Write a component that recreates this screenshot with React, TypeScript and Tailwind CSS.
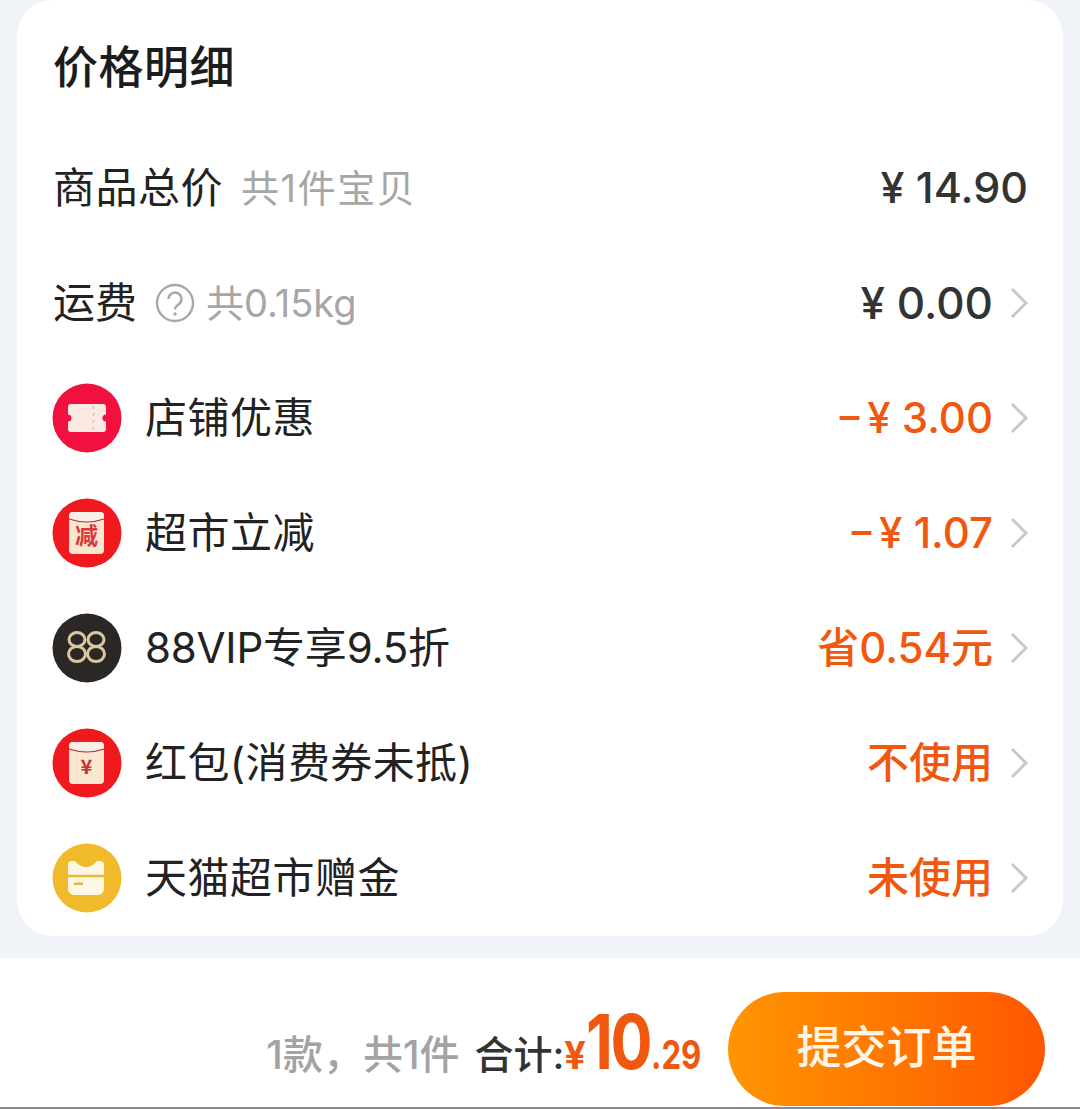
import React from "react";

const font = "font-['Inter','Noto_Sans_CJK_SC',sans-serif]";

const Chevron = () => (
  <svg width="20" height="32" viewBox="0 0 20 32" fill="none" className="ml-[16px] mr-[1px] shrink-0">
    <path d="M3 2 L17 16 L3 30" stroke="#c8c8c8" strokeWidth="3" />
  </svg>
);

const Disc = ({ color, children }: { color: string; children: React.ReactNode }) => (
  <svg width="70" height="70" viewBox="0 0 70 70" className="shrink-0">
    <circle cx="35" cy="35" r="34.5" fill={color} />
    {children}
  </svg>
);

const TicketIcon = () => (
  <Disc color="#f0113f">
    <path
      d="M16 24 a3 3 0 0 1 3-3 H51 a3 3 0 0 1 3 3 V31.5 a3.5 3.5 0 0 0 0 7 V46 a3 3 0 0 1-3 3 H19 a3 3 0 0 1-3-3 V38.5 a3.5 3.5 0 0 0 0-7 Z"
      fill="#fbeae4"
    />
    <path d="M41.5 23 V48" stroke="#f3c0ba" strokeWidth="2" strokeDasharray="3 4" />
  </Disc>
);

const EnvelopeIcon = ({ label, size, color }: { label: string; size: number; color: string }) => (
  <Disc color="#f01a1e">
    <rect x="17" y="14" width="35" height="42" rx="4" fill="#fbe7cf" />
    <path d="M17 18 a4 4 0 0 1 4-4 H48 a4 4 0 0 1 4 4 V21 Q35 27 17 21 Z" fill="#f8f0e8" />
    <path d="M17 21 Q35 27 52 21" stroke="#b52a30" strokeWidth="1.2" fill="none" />
    <text x="34.5" y="46" textAnchor="middle" fontSize={size} fontWeight="700" fill={color} fontFamily="'Noto Sans CJK SC',sans-serif">
      {label}
    </text>
  </Disc>
);

const VipIcon = () => (
  <Disc color="#2b2725">
    <g fill="none" stroke="#d9c7a0" strokeWidth="3">
      <ellipse cx="25" cy="26.5" rx="8" ry="7" />
      <ellipse cx="25" cy="41" rx="8.5" ry="7.5" />
      <ellipse cx="44" cy="26.5" rx="8" ry="7" />
      <ellipse cx="44" cy="41" rx="8.5" ry="7.5" />
    </g>
  </Disc>
);

const CardIcon = () => (
  <Disc color="#f1b92c">
    <path
      d="M16 22 a4 4 0 0 1 4-4 H23 Q28 24 34 24 Q40 24 45 18 H48 a4 4 0 0 1 4 4 V46 a6 6 0 0 1-6 6 H22 a6 6 0 0 1-6-6 Z"
      fill="#fdf7e6"
    />
    <path d="M16 33 H52" stroke="#f1b92c" strokeWidth="2.5" />
    <rect x="22" y="39.5" width="9" height="2.5" fill="#e2b64a" />
  </Disc>
);

const rows = [
  { icon: <TicketIcon />, label: "店铺优惠", value: "−\u200A¥ 3.00", track: "tracking-[0.5px]" },
  { icon: <EnvelopeIcon label="减" size={23} color="#d8393a" />, label: "超市立减", value: "−\u200A¥ 1.07", track: "tracking-[0.5px]" },
  { icon: <VipIcon />, label: "88VIP专享9.5折", value: "省0.54元", track: "tracking-[-0.2px]" },
  { icon: <EnvelopeIcon label="¥" size={20} color="#c8322f" />, label: "红包(消费券未抵)", value: "不使用", track: "tracking-[0.4px]" },
  { icon: <CardIcon />, label: "天猫超市赠金", value: "未使用", track: "tracking-[0.5px]" },
];

export default function App() {
  return (
    <div className={`${font} h-[1109px] w-[1080px] overflow-hidden bg-[#f0f4f8] flex flex-col`}>
      <div className="mx-[17px] h-[936px] shrink-0 rounded-[36px] bg-white pl-[36px] pr-[35px]">
        <div className="flex h-[130px] items-center pt-[4px] text-[45px] font-medium leading-none tracking-[0.5px] text-[#1c1c1c]">
          价格明细
        </div>
        <div className="flex h-[115px] items-center justify-between">
          <div className="flex items-center">
            <span className="text-[42px] leading-none tracking-[0.5px] text-[#222222]">商品总价</span>
            <span className="ml-[18px] text-[38px] leading-none tracking-[1.6px] text-[#a6a6a6]">共1件宝贝</span>
          </div>
          <span className="text-[43px] font-medium leading-none text-[#333333]">¥ 14.90</span>
        </div>
        <div className="flex h-[115px] items-center justify-between">
          <div className="flex items-center">
            <span className="text-[42px] leading-none text-[#222222]">运费</span>
            <svg width="40" height="40" viewBox="0 0 40 40" fill="none" className="ml-[18px]">
              <circle cx="20" cy="20" r="18" stroke="#a8a8a8" strokeWidth="2.4" />
              <path d="M13.5 16 a6.5 6.5 0 1 1 10 5.5 c-2.5 1.7-3.5 2.5-3.5 5" stroke="#a8a8a8" strokeWidth="2.4" />
              <circle cx="20" cy="31" r="1.7" fill="#a8a8a8" />
            </svg>
            <span className="ml-[11px] text-[38px] leading-none text-[#a6a6a6]">共0.15kg</span>
          </div>
          <div className="mr-[-2px] flex items-center">
            <span className="text-[44px] font-medium leading-none text-[#333333]">¥ 0.00</span>
            <Chevron />
          </div>
        </div>
        {rows.map((r) => (
          <div key={r.label} className="flex h-[115px] items-center justify-between">
            <div className="-ml-[1px] flex items-center">
              {r.icon}
              <span className={`ml-[23px] text-[42px] leading-none text-[#222222] ${r.track}`}>{r.label}</span>
            </div>
            <div className="mr-[-2px] flex items-center">
              <span className="text-[42px] font-medium leading-none text-[#f0570f]">{r.value}</span>
              <Chevron />
            </div>
          </div>
        ))}
      </div>
      <div className="mt-[22px] flex h-[149px] shrink-0 items-end justify-end bg-white pr-[35px]">
        <div className="mb-[28px] flex items-baseline">
          <span className="text-[40px] font-medium leading-none text-[#a3a3a3]">1款，共1件</span>
          <span className="ml-[15px] text-[39px] font-medium leading-none text-[#333333]">合计:</span>
          <span className="flex items-baseline font-bold leading-none text-[#f0570f]">
            <span className="text-[38px]">¥</span>
            <span className="inline-block w-[65px] origin-left scale-x-[0.82] text-[76px] tracking-[-3px]">10</span>
            <span className="inline-block w-[48px] origin-left scale-x-[0.78] text-[40px]">.29</span>
          </span>
        </div>
        <button className="mb-[1px] ml-[29px] flex h-[114px] w-[317px] items-center justify-center rounded-full bg-gradient-to-r from-[#ff9500] to-[#ff5500] pb-[4px] text-[45px] font-medium leading-none text-[#fff6ea]">
          提交订单
        </button>
      </div>
      <div className="h-[2px] shrink-0 bg-[#8a8a8a]" />
    </div>
  );
}
